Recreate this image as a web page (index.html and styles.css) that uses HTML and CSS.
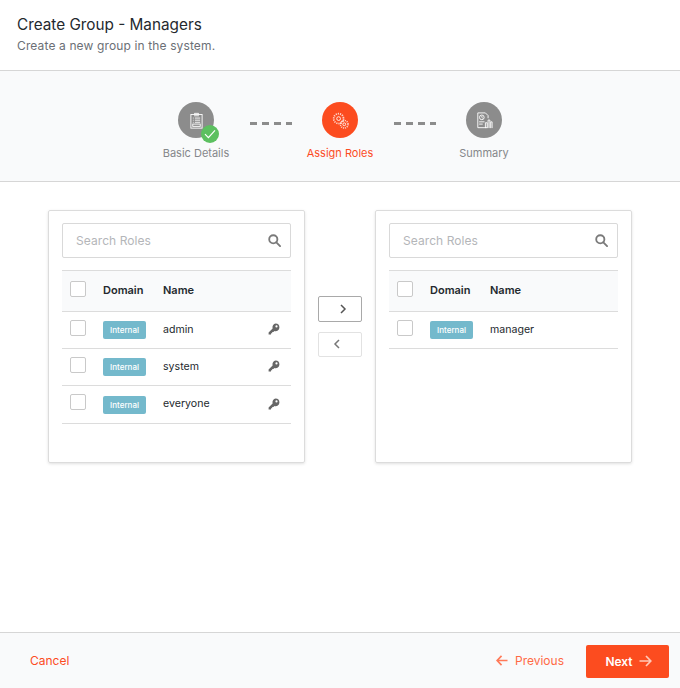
FILE: index.html
```html
<!DOCTYPE html>

<html>
<head>
    <title>Create Group - Managers</title>
    <meta charset="UTF-8">
    <link rel="stylesheet" href="styles.css">
</head>
<body>

<div class="page">
    <div class="header">
        <h1>Create Group - Managers</h1>
        <p>Create a new group in the system.</p>
    </div>

    <div class="stepper">
        <div class="step">
            <div class="step-icon">
                <svg width="13" height="17" viewBox="0 0 16 20" fill="none" stroke="#fff" stroke-width="1.1">
                    <rect x="1.1" y="2.6" width="13.8" height="16.8"/>
                    <path d="M5.5 2.6V1.2h5v1.4M5 4.2h6"/>
                    <path d="M3.5 7h1M6 7h6.5M3.5 9.6h1M6 9.6h6.5M3.5 12.2h1M6 12.2h6.5"/>
                    <rect x="3.4" y="14.4" width="9.2" height="2.8"/>
                </svg>
                <span class="step-done">
                    <svg width="12" height="10" viewBox="0 0 12 10" fill="none" stroke="#fff" stroke-width="1.2"><path d="M1 5.2l3.4 3.4L11 1.4"/></svg>
                </span>
            </div>
            <div class="step-label">Basic Details</div>
        </div>
        <div class="step-dash"></div>
        <div class="step active">
            <div class="step-icon">
                <svg width="17" height="17" viewBox="0 0 18 18" fill="none" stroke="#fff">
                    <circle cx="7" cy="7" r="5.2" stroke-width="1.9" stroke-dasharray="1.3 1" opacity=".75"/>
                    <circle cx="7" cy="7" r="2" stroke-width=".9"/>
                    <circle cx="13" cy="13" r="4" stroke-width="1.7" stroke-dasharray="1.2 .9" opacity=".75"/>
                    <circle cx="13" cy="13" r="1.5" stroke-width=".9"/>
                </svg>
            </div>
            <div class="step-label">Assign Roles</div>
        </div>
        <div class="step-dash"></div>
        <div class="step">
            <div class="step-icon">
                <svg width="17" height="17" viewBox="0 0 18 19" fill="none" stroke="#fff" stroke-width="1">
                    <path d="M12 17.5H1.5V1h8.5l3 3v3"/>
                    <circle cx="6" cy="6" r="2.6"/>
                    <path d="M6 4.6V6l1 .8M3 11h6M3 13.5h4"/>
                    <path d="M10 18v-6h2v6M13 18V9h2v9M16 18v-7h1.5v7"/>
                </svg>
            </div>
            <div class="step-label">Summary</div>
        </div>
    </div>

    <div class="content">
        <div class="panel">
            <div class="search">
                <span>Search Roles</span>
                <svg width="13" height="13" viewBox="0 0 14 14" fill="none" stroke="#7a7a7a" stroke-width="2"><circle cx="5.7" cy="5.7" r="4.4"/><path d="M9 9l4 4" stroke-linecap="round"/></svg>
            </div>
            <div class="row head">
                <span class="check"></span>
                <span class="domain">Domain</span>
                <span class="name">Name</span>
            </div>
            <div class="row">
                <span class="check"></span>
                <span class="domain"><span class="badge">Internal</span></span>
                <span class="name">admin</span>
                <svg class="key" width="12" height="12" viewBox="0 0 12 12"><use href="#key"/></svg>
            </div>
            <div class="row">
                <span class="check"></span>
                <span class="domain"><span class="badge">Internal</span></span>
                <span class="name">system</span>
                <svg class="key" width="12" height="12" viewBox="0 0 12 12"><use href="#key"/></svg>
            </div>
            <div class="row last">
                <span class="check"></span>
                <span class="domain"><span class="badge">Internal</span></span>
                <span class="name">everyone</span>
                <svg class="key" width="12" height="12" viewBox="0 0 12 12"><use href="#key"/></svg>
            </div>
        </div>

        <div class="moves">
            <div class="move">
                <svg width="8" height="10" viewBox="0 0 8 10" fill="none" stroke="#555" stroke-width="1.5"><path d="M2 1l4 4-4 4"/></svg>
            </div>
            <div class="move off">
                <svg width="8" height="10" viewBox="0 0 8 10" fill="none" stroke="#777" stroke-width="1.5"><path d="M6 1L2 5l4 4"/></svg>
            </div>
        </div>

        <div class="panel">
            <div class="search">
                <span>Search Roles</span>
                <svg width="13" height="13" viewBox="0 0 14 14" fill="none" stroke="#7a7a7a" stroke-width="2"><circle cx="5.7" cy="5.7" r="4.4"/><path d="M9 9l4 4" stroke-linecap="round"/></svg>
            </div>
            <div class="row head">
                <span class="check"></span>
                <span class="domain">Domain</span>
                <span class="name">Name</span>
            </div>
            <div class="row">
                <span class="check"></span>
                <span class="domain"><span class="badge">Internal</span></span>
                <span class="name">manager</span>
            </div>
        </div>
    </div>

    <div class="footer">
        <a class="cancel">Cancel</a>
        <a class="prev">
            <svg width="12" height="11" viewBox="0 0 13 12" fill="none" stroke="#ff7a59" stroke-width="1.8"><path d="M6 1L1.2 6 6 11M1.5 6H12.5"/></svg>
            Previous
        </a>
        <a class="next">
            Next
            <svg width="13" height="12" viewBox="0 0 13 12" fill="none" stroke="#ffc9b8" stroke-width="1.7"><path d="M7 1l4.8 5L7 11M11.5 6H.5"/></svg>
        </a>
    </div>
</div>

<svg width="0" height="0" class="defs">
    <symbol id="key" viewBox="0 0 12 12">
        <path fill="#666" d="M7.6 .6a3.8 3.8 0 0 1 3.8 3.8 3.8 3.8 0 0 1-4.9 3.6L5.4 9.1H4.2v1.2H3v1.2H.6V9.4l4-4A3.8 3.8 0 0 1 7.6 .6zm.9 1.7a1.1 1.1 0 1 0 0 2.2 1.1 1.1 0 0 0 0-2.2z" fill-rule="evenodd"/>
    </symbol>
</svg>

</body>
</html>
```

FILE: styles.css
```css
html {
    box-sizing: border-box;
}
*, *:before, *:after {
    box-sizing: inherit;
}

body{
    margin: 0;
    font-family: Inter, "Noto Sans", sans-serif;
    color: #24292e;
    background-color: white;
}

.defs{
    display: block;
    height: 0;
}

.page{
    height: 688px;
    display: flex;
    flex-direction: column;
}

.header{
    height: 71px;
    padding: 15px 17px 0 17px;
    border-bottom: 1px solid #d6d6d6;
}

.header h1{
    margin: 0;
    font-size: 15.3px;
    line-height: 20px;
    font-weight: 400;
}

.header p{
    margin: 2px 0 0 0;
    font-size: 12px;
    line-height: 17px;
    letter-spacing: 0.13px;
    color: #6b6f76;
}

.stepper{
    height: 111px;
    padding-top: 31px;
    display: flex;
    justify-content: center;
    align-items: flex-start;
    background-color: #f9fafb;
    border-bottom: 1px solid #d6d6d6;
}

.step{
    width: 100px;
    display: flex;
    flex-direction: column;
    align-items: center;
}

.step-icon{
    position: relative;
    width: 36px;
    height: 36px;
    border-radius: 50%;
    background-color: #8c8c8c;
    display: flex;
    align-items: center;
    justify-content: center;
}

.step-done{
    position: absolute;
    right: -5px;
    bottom: -5px;
    width: 18px;
    height: 18px;
    border-radius: 50%;
    background-color: #5cc060;
    display: flex;
    align-items: center;
    justify-content: center;
}

.step-label{
    margin-top: 8px;
    font-size: 11px;
    line-height: 15px;
    color: #85878a;
}

.step.active .step-icon{
    background-color: #fc4c1f;
}

.step.active .step-label{
    color: #fc4c1f;
}

.step-dash{
    width: 42px;
    height: 3px;
    margin: 20px -2px 0 4px;
    background-image: repeating-linear-gradient(to right, #8c8c8c 0, #8c8c8c 7px, transparent 7px, transparent 12px);
}

.content{
    flex: 1;
    padding: 28px 48px 0 48px;
    display: flex;
    align-items: flex-start;
}

.panel{
    width: 257px;
    height: 253px;
    padding: 12px 13px;
    border: 1px solid #dcdcdc;
    border-radius: 2px;
    box-shadow: 0 1px 3px rgba(0, 0, 0, 0.12);
}

.search{
    height: 35px;
    padding: 0 9px 0 13px;
    margin-bottom: 12px;
    border: 1px solid #d9d9d9;
    border-radius: 2px;
    display: flex;
    align-items: center;
    justify-content: space-between;
    font-size: 12px;
    letter-spacing: 0.07px;
    color: #b4b6b9;
}

.row{
    height: 37px;
    display: flex;
    align-items: center;
    font-size: 10.6px;
    border-bottom: 1px solid #dcdcdc;
}

.row.last{
    height: 38px;
}

.row.head{
    height: 42px;
    font-size: 11px;
    font-weight: 600;
    background-color: #f9fafb;
    border-top: 1px solid #dcdcdc;
}

.row.head .domain{
    margin-bottom: 2px;
}

.check{
    width: 16px;
    height: 16px;
    margin: 0 0 5px 8px;
    background-color: white;
    border: 1px solid #c9c9c9;
    border-radius: 2px;
}

.domain{
    width: 60px;
    margin-left: 17px;
}

.badge{
    display: block;
    width: 43px;
    height: 18px;
    line-height: 18px;
    text-align: center;
    font-size: 8px;
    font-weight: 500;
    color: white;
    background-color: #74b9cc;
    border-radius: 2px;
}

.name{
    flex: 1;
    margin-bottom: 2px;
}

.key{
    margin: 0 11px 2px 0;
}

.moves{
    width: 70px;
    padding-top: 86px;
    display: flex;
    flex-direction: column;
    align-items: center;
    gap: 10px;
}

.move{
    width: 44px;
    height: 26px;
    padding-left: 6px;
    border: 1px solid #a9a9a9;
    border-radius: 2px;
    display: flex;
    align-items: center;
    justify-content: center;
}

.move.off{
    height: 25px;
    padding: 0 7px 2px 0;
    border-color: #e2e2e2;
}

.footer{
    height: 56px;
    padding: 1px 11px 0 30px;
    display: flex;
    align-items: center;
    background-color: #f9fafb;
    border-top: 1px solid #d6d6d6;
    font-size: 12px;
}

.cancel{
    flex: 1;
    margin-bottom: 2px;
    color: #fc4c1f;
}

.prev{
    display: flex;
    align-items: center;
    gap: 7px;
    margin: 0 22px 2px 0;
    color: #ff6a45;
}

.next{
    width: 83px;
    height: 33px;
    padding-left: 2px;
    display: flex;
    align-items: center;
    justify-content: center;
    gap: 6px;
    font-weight: 600;
    color: white;
    background-color: #fc4c1f;
    border-radius: 2px;
}
```
